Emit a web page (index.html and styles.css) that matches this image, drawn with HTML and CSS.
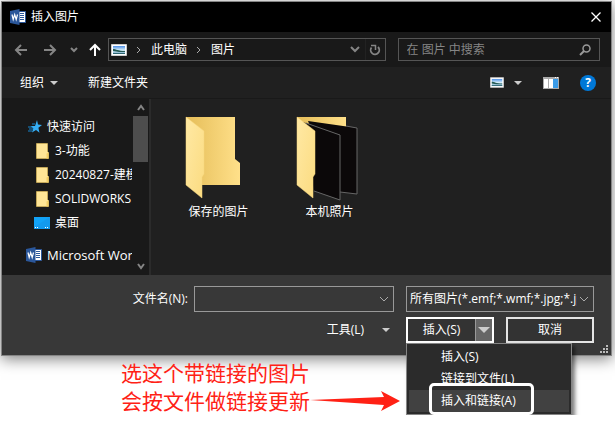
FILE: index.html
```html
<!DOCTYPE html>
<html lang="zh-CN">
<head>
<meta charset="utf-8">
<title>插入图片</title>
<link rel="stylesheet" href="styles.css">
</head>
<body>
<svg class="defs" aria-hidden="true">
  <defs>
    <linearGradient id="back" x1="0" x2="1"><stop offset="0" stop-color="#e5bd58"/><stop offset="1" stop-color="#ffe08a"/></linearGradient>
    <linearGradient id="front" x1="0" x2="1" y2="1"><stop offset="0" stop-color="#ffe9a4"/><stop offset="1" stop-color="#fbdb80"/></linearGradient>
    <linearGradient id="sky" x2="0" y2="1"><stop offset="0" stop-color="#4d8fe8"/><stop offset=".5" stop-color="#d4edf8"/><stop offset="1" stop-color="#76a9c9"/></linearGradient>
    <symbol id="word" viewBox="0 0 16 16"><path fill="#fff" stroke="#2b579a" d="M8.500 2.500h7v11h-7z"/><path stroke="#2b579a" d="M10 4.500h4M10 6.500h4M10 8.500h4M10 10.500h4"/><path fill="#2b579a" d="M0 2 9.500 0v16L0 14z"/><path fill="none" stroke="#fff" stroke-width="1.200" d="m2 5.500 1.200 5 1.500-5 1.500 5 1.300-5"/></symbol>
    <symbol id="photo" viewBox="0 0 16 12"><path fill="#fff" stroke="#ccc" d="M.5.5h15v11H.5z"/><path fill="url(#sky)" d="M2 2h12v8H2z"/><path fill="#255b54" d="M2 5c3 0 5 2 12 2v1c-5 0-7 0-12-1z"/><path fill="#2d6570" d="M2 9h12v1H2z"/></symbol>
    <symbol id="folder" viewBox="0 0 13 16"><path fill="#ffe596" stroke="#e9c35a" stroke-width=".6" d="M.5.5h11v8l1 1v6H.5z"/><path fill="#f3cf67" d="M10.500 10.500 12.500 9.500v6h-2z"/></symbol>
  </defs>
</svg>
<main class="page">
<section class="dialog" aria-label="插入图片">
  <header class="title">
    <svg class="i16"><use href="#word"/></svg>
    <h1>插入图片</h1>
    <button class="close" aria-label="关闭"><svg width="10" height="10" viewBox="0 0 10 10"><path d="m.5.5 9 9m0-9-9 9" stroke="#fff" stroke-width="1.300"/></svg></button>
  </header>
  <nav class="nav">
    <div class="history">
      <button aria-label="后退"><svg width="14" height="12" viewBox="0 0 14 12"><path d="M13 6H2m5-5L2 6l5 5" class="dim"/></svg></button>
      <button aria-label="前进"><svg width="14" height="12" viewBox="0 0 14 12"><path d="M1 6h11M7 1l5 5-5 5" class="dim"/></svg></button>
      <button aria-label="最近位置"><svg width="8" height="6" viewBox="0 0 8 6"><path d="m1 1 3 3 3-3" class="dim"/></svg></button>
      <button aria-label="上移"><svg width="12" height="14" viewBox="0 0 12 14"><path d="M6 13V2M1 7l5-5 5 5" class="lit"/></svg></button>
    </div>
    <div class="address">
      <svg class="photo"><use href="#photo"/></svg>
      <svg class="sep" viewBox="0 0 6 8"><path d="m1 1 3 3-3 3" class="thin"/></svg>
      <a href="#pc">此电脑</a>
      <svg class="sep" viewBox="0 0 6 8"><path d="m1 1 3 3-3 3" class="thin"/></svg>
      <a href="#pictures">图片</a>
      <button class="drop" aria-label="以前的位置"><svg width="10" height="7" viewBox="0 0 10 7"><path d="m1 1 4 4 4-4" class="dim"/></svg></button>
      <button class="refresh" aria-label="刷新"><svg width="12" height="12" viewBox="0 0 12 12"><path d="M2.500 3.500A4.300 4.300 0 1 0 9 3" fill="none" stroke="#858585" stroke-width="1.800"/><path d="M2 1.500h4.500V6" fill="none" stroke="#858585" stroke-width="1.500"/></svg></button>
    </div>
    <label class="search">
      <input type="search" placeholder="在 图片 中搜索" aria-label="在 图片 中搜索">
      <svg width="12" height="12" viewBox="0 0 12 12"><circle cx="7.500" cy="4.500" r="3.500" fill="none" stroke="#999" stroke-width="1.500"/><path d="m5 7-4 4" stroke="#999" stroke-width="2"/></svg>
    </label>
  </nav>
  <div class="toolbar">
    <button>组织<i class="tri"></i></button>
    <button>新建文件夹</button>
    <div class="views">
      <button aria-label="更改视图"><svg class="view"><use href="#photo"/></svg><i class="tri"></i></button>
      <button aria-label="预览窗格"><svg width="16" height="12" viewBox="0 0 16 12"><path fill="#aaa" d="M0 0h16v12H0z"/><path fill="#fff" d="M1 2h4v9H1zM6 2h4v9H6z"/><path fill="#3a9be8" d="M10 2h5v9h-5z"/><path fill="#fff" d="M12 0h1v1h-1zM14 0h1v1h-1z"/></svg></button>
      <button class="help" aria-label="帮助">?</button>
    </div>
  </div>
  <div class="body">
    <aside class="side">
      <ul class="tree">
        <li><svg width="14" height="14" viewBox="0 0 14 14"><path fill="#35aef5" d="m9 0 1 4.500 4 .5-3.600 2.800 1.100 5L8 10l-4 2.500 1.300-4L2.500 6H7z"/><path stroke="#1684cc" d="M0 7h4M1 9h4M0 11h4M4 4h3"/></svg>快速访问</li>
        <li class="sub"><svg class="fold"><use href="#folder"/></svg>3-功能</li>
        <li class="sub"><svg class="fold"><use href="#folder"/></svg>20240827-建模</li>
        <li class="sub"><svg class="fold"><use href="#folder"/></svg>SOLIDWORKS</li>
        <li class="desk"><svg width="16" height="12" viewBox="0 0 16 12"><path fill="#12a3f7" d="M0 0h16v12H0z"/><path fill="#1689dc" d="M0 10 16 0v12H0z" opacity=".3"/><path stroke="#fff" stroke-dasharray="1 1" d="M1 10.500h4M11 10.500h4"/></svg>桌面</li>
        <li class="app"><svg class="i16"><use href="#word"/></svg>Microsoft Word</li>
      </ul>
      <div class="scroll">
        <svg width="8" height="6" viewBox="0 0 8 6"><path d="m1 5 3-4 3 4" class="dim"/></svg>
        <span class="thumb"></span>
        <svg class="down" width="8" height="6" viewBox="0 0 8 6"><path d="m1 1 3 4 3-4" class="dim"/></svg>
      </div>
    </aside>
    <div class="files">
      <figure>
        <svg width="64" height="84" viewBox="6 0 64 84"><path fill="url(#back)" d="M5 1h49v42l5 4v22H5z"/><path fill="url(#front)" stroke="#f7d77c" stroke-width=".5" d="M5 1 23 15v43l-2 3v21L5 69z"/></svg>
        <figcaption>保存的图片</figcaption>
      </figure>
      <figure>
        <svg width="64" height="84" viewBox="6 0 64 84"><path fill="url(#back)" d="M5 1h49v20H12z"/><path fill="#0b0809" d="m16 5 49 7v66l-20-2z"/><path fill="none" stroke="#666" d="m54 10 11 2v66l-17-2"/><path fill="#0b0809" d="m11 6 37 13v65l-26-9z"/><path fill="none" stroke="#666" d="m14 7 34 12v65l-26-9"/><path fill="url(#front)" stroke="#f7d77c" stroke-width=".5" d="M5 1 23 15v43l-2 3v21L5 69z"/></svg>
        <figcaption>本机照片</figcaption>
      </figure>
    </div>
  </div>
  <footer class="foot">
    <label for="name">文件名(N):</label>
    <div class="combo"><input id="name" type="text"><svg width="10" height="7" viewBox="0 0 10 7"><path d="m1 1 4 4 4-4" class="thin"/></svg></div>
    <div class="combo"><select aria-label="文件类型"><option>所有图片(*.emf;*.wmf;*.jpg;*.jpeg)</option></select><svg width="10" height="7" viewBox="0 0 10 7"><path d="m1 1 4 4 4-4" class="thin"/></svg></div>
    <button class="tools">工具(L)<i class="tri"></i></button>
    <div class="actions">
      <div class="split">
        <button class="insert">插入(S)</button><button class="more" aria-label="更多插入选项"><i class="tri"></i></button>
        <div class="menu" role="menu">
          <button role="menuitem">插入(S)</button>
          <button role="menuitem">链接到文件(L)</button>
          <button role="menuitem" class="active">插入和链接(A)</button>
          <span class="mark"></span>
        </div>
      </div>
      <button class="cancel">取消</button>
    </div>
    <svg class="grip" width="9" height="9" viewBox="0 0 9 9"><path fill="#bbb" d="M6 0h2v2H6zM3 3h2v2H3zM6 3h2v2H6zM0 6h2v2H0zM3 6h2v2H3zM6 6h2v2H6z"/></svg>
  </footer>
</section>
<div class="note">
  <p>选这个带链接的图片<br>会按文件做链接更新</p>
  <svg width="90" height="20" viewBox="0 0 90 20"><path fill="#ff2115" d="M0 9 74 6 71 0l19 10-19 10 3-6z"/></svg>
</div>
</main>
</body>
</html>
```
FILE: styles.css
```css
* { box-sizing: border-box; }
body {
  margin: 0;
  background: #fff;
  color: #fff;
  font: 12px/16px "Open Sans", "Noto Sans CJK SC", sans-serif;
}
button, input, select { font: inherit; color: inherit; background: none; border: 0; padding: 0; margin: 0; }
button { display: flex; align-items: center; justify-content: center; }
svg { display: block; flex: none; overflow: visible; }
.defs { position: absolute; width: 0; height: 0; }
.page { padding: 1px 3px 0 1px; }
.dim, .lit, .thin { fill: none; stroke: #858585; stroke-width: 2; }
.lit { stroke: #fff; }
.thin { stroke: #aaa; stroke-width: 1; }
.i16 { width: 16px; height: 16px; }
.tri { border: 4px solid transparent; border-top-color: #ccc; border-bottom: 0; }

.dialog {
  border: 1px solid #858585;
  box-shadow: 0 3px 14px rgba(0, 0, 0, .5);
  background: #383838;
}
.title { display: flex; align-items: center; gap: 5px; height: 30px; padding: 0 10px 0 8px; background: #000; }
.title h1 { margin: 0; font: inherit; flex: 1; }

.nav {
  display: grid;
  grid-template-columns: 94px 277fr 12px 202fr;
  align-items: center;
  height: 35px;
  padding: 0 11px 0 12px;
  background: #191919;
}
.history { display: flex; align-items: center; gap: 15px; }
.history button:nth-child(3) { margin: 0 -4px 0 -2px; }
.address { display: flex; align-items: center; height: 23px; padding-left: 2px; border: 1px solid #555; }
.photo { width: 16px; height: 12px; }
.sep { width: 6px; height: 8px; margin: 0 9px; }
a { color: inherit; text-decoration: none; }
.drop { margin-left: auto; width: 20px; height: 21px; }
.refresh { width: 20px; height: 21px; border-left: 1px solid #222; }
.search { grid-column: 4; display: flex; align-items: center; height: 23px; padding: 0 8px; border: 1px solid #555; }
.search input { flex: 1; min-width: 0; outline: 0; appearance: none; }
.search input::placeholder { color: #858585; opacity: 1; }

.toolbar { display: flex; align-items: center; gap: 30px; height: 32px; padding: 0 15px 0 18px; background: #202020; border-bottom: 1px solid #191919; }
.toolbar button { gap: 6px; }
.views { display: flex; align-items: center; gap: 21px; margin-left: auto; }
.views button:first-child { gap: 10px; }
.view { width: 14px; height: 11px; }
.help { width: 16px; height: 16px; border-radius: 50%; background: #0078d7; font-weight: 700; }

.body { display: flex; height: 176px; }
.side { display: flex; width: 149px; background: #191919; border-right: 2px solid #2b2b2b; }
.tree { flex: 1; min-width: 0; margin: 0; padding: 16px 0 0 24px; list-style: none; overflow: hidden; white-space: nowrap; }
.tree li { display: flex; align-items: center; gap: 5px; height: 24px; padding-left: 2px; }
.tree .sub { padding-left: 10px; gap: 6px; }
.tree .desk { padding-left: 8px; }
.tree .app { margin-top: 8px; padding-left: 0; font-size: 13px; }
.fold { width: 13px; height: 16px; }
.scroll { display: flex; flex-direction: column; align-items: center; width: 17px; padding: 6px 1px; }
.thumb { width: 15px; height: 46px; margin-top: 5px; background: #4d4d4d; }
.down { margin-top: auto; }
.files { display: flex; flex: 1; padding: 17px 0 0 12px; background: #202020; }
figure { display: flex; flex-direction: column; align-items: center; gap: 4px; width: 111px; margin: 0; }

.foot {
  position: relative;
  display: grid;
  grid-template-columns: 1fr 200px 188px;
  grid-template-rows: 26px 26px;
  column-gap: 12px;
  row-gap: 5px;
  padding: 11px 17px 12px 0;
}
.foot > label { justify-self: end; align-self: center; margin-right: -6px; }
.combo { display: flex; align-items: center; border: 1px solid #999; padding-right: 4px; }
.combo input, .combo select { flex: 1; min-width: 0; height: 24px; padding-left: 3px; outline: 0; appearance: none; }
.combo select { margin-right: 2px; overflow: hidden; text-overflow: clip; white-space: nowrap; }
.tools { grid-column: 2; justify-self: end; gap: 18px; margin-right: 4px; }
.actions { display: grid; grid-template-columns: 1fr 1fr; gap: 12px; }
.split { position: relative; display: flex; border: 2px solid #fff; background: #333; }
.insert { flex: 1; }
.more { width: 17px; background: #666; border-left: 1px solid #999; }
.more .tri { border-width: 6px 6px 0; }
.cancel { border: 2px solid #e5e5e5; background: #333; }
.menu {
  position: absolute;
  top: 24px;
  left: -2px;
  width: 166px;
  padding: 2px;
  border: 1px solid #858585;
  background: #2b2b2b;
  box-shadow: 3px 3px 4px rgba(0, 0, 0, .5);
}
.menu button { width: 100%; height: 22px; padding-left: 32px; justify-content: flex-start; }
.menu .active { background: #414141; }
.mark { position: absolute; left: 22px; top: 39px; width: 105px; height: 32px; border: 3px solid #fff; border-radius: 5px; }
.grip { position: absolute; right: 2px; bottom: 1px; }

.note { display: flex; align-items: flex-end; padding: 3px 0 0 120px; color: #ff2115; }
.note p { margin: 0; font-size: 21px; line-height: 28px; }
.note svg { margin-bottom: 4px; }
```
